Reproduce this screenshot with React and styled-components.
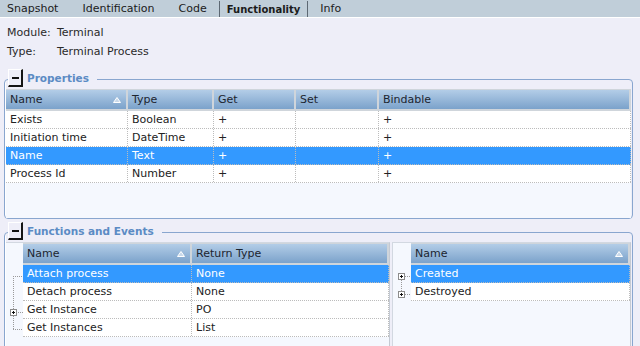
import React from "react";
import styled, { createGlobalStyle } from "styled-components";

const GlobalStyle = createGlobalStyle`
  html, body {
    margin: 0;
    padding: 0;
    height: 346px;
    overflow: hidden;
    background: #eeeef8;
    font-family: "DejaVu Sans", Verdana, sans-serif;
    font-size: 11px;
    color: #222;
  }
`;

const Page = styled.div`
  display: flex;
  flex-direction: column;
  height: 346px;
`;

const TabBar = styled.div`
  display: flex;
  height: 17px;
  background: #c0ced9;
  border-bottom: 1px solid #fff;
`;

const Tab = styled.div`
  padding: 0 ${(p) => (p.$active ? "7px" : "12px")};
  line-height: 17px;
  font-weight: ${(p) => (p.$active ? 700 : 400)};
  font-size: ${(p) => (p.$active ? "10px" : "11px")};
  color: #1b1b1b;
  border-left: ${(p) => (p.$active ? "1px solid #5d6873" : "none")};
  border-right: ${(p) => (p.$active ? "1px solid #5d6873" : "none")};
  margin-top: ${(p) => (p.$active ? "1px" : "0")};
  &:first-child {
    padding-left: 7px;
  }
`;

const InfoBlock = styled.div`
  padding: 5px 7px 0;
  margin-bottom: 8px;
`;

const InfoRow = styled.div`
  display: flex;
  line-height: 19px;
  color: #2a2a2a;
`;

const InfoLabel = styled.span`
  width: 50px;
`;

const Group = styled.fieldset`
  margin: ${(p) => (p.$first ? "0" : "3px")} 7px 0 4px;
  padding: 0 1px;
  border: 1px solid #89a6cf;
  border-radius: 4px;
  box-shadow: inset 1px 0 0 #fff;
  min-width: 0;
`;

const Legend = styled.legend`
  display: flex;
  align-items: flex-start;
  height: 20px;
  padding: 0 8px 0 0;
  margin-left: 2px;
`;

const CollapseButton = styled.div`
  width: 12px;
  height: 15px;
  border-left: 1px solid #fff;
  border-top: 1px solid #fff;
  border-right: 2px solid #151515;
  border-bottom: 2px solid #151515;
  display: flex;
  align-items: center;
  justify-content: center;
  &::before {
    content: "";
    width: 7px;
    height: 2px;
    background: #111;
  }
`;

const LegendTitle = styled.span`
  margin-left: 4px;
  padding-top: 1px;
  line-height: 17px;
  font-size: 10.5px;
  font-weight: 700;
  color: #5b8bc4;
`;

const PropsPanel = styled.div`
  height: 129px;
  background: #f5f8fe;
`;

const GridHead = styled.div`
  display: grid;
  grid-template-columns: ${(p) => p.$cols};
  height: 22px;
  box-sizing: border-box;
  background: linear-gradient(#b3cde7, #7ba2cb);
  border-top: 1px solid #cfd5db;
  border-bottom: 2px solid #cfd5db;
`;

const HeadCell = styled.div`
  display: flex;
  align-items: center;
  justify-content: space-between;
  padding: 0 5px 0 4px;
  border-right: 2px solid #cfd5db;
  color: #1c2530;
  white-space: nowrap;
  overflow: hidden;
`;

const GridRow = styled.div`
  display: grid;
  grid-template-columns: ${(p) => p.$cols};
  height: 18px;
  box-sizing: border-box;
  background: ${(p) => (p.$selected ? "#3399ff" : "#fff")};
  color: ${(p) => (p.$selected ? "#fff" : "#222")};
  border-bottom: 1px dotted #bcbcbc;
`;

const Cell = styled.div`
  padding: 0 4px;
  line-height: 17px;
  border-right: 1px dotted #bcbcbc;
  white-space: nowrap;
  overflow: hidden;
`;

const SplitPanels = styled.div`
  display: flex;
  gap: 2px;
  height: 140px;
`;

const Panel = styled.div`
  display: flex;
  flex: ${(p) => (p.$grow ? 1 : "none")};
  width: ${(p) => p.$width || "auto"};
  background: #f5f8fe;
  border-top: 1px solid #d2d8e1;
  border-left: ${(p) => (p.$grow ? "1px solid #d2d8e1" : "none")};
  border-right: 1px solid #c4cad3;
`;

const TreeGutter = styled.div`
  flex: none;
  width: ${(p) => p.$width}px;
  padding-top: 22px;
`;

const GridArea = styled.div`
  flex: 1;
  min-width: 0;
`;

const SortArrow = () => (
  <svg width="8" height="6" viewBox="0 0 8 6">
    <polygon points="4,0.5 7.5,5.5 0.5,5.5" fill="#c9d9ea" stroke="#fff" strokeWidth="1" />
  </svg>
);

const PlusBox = ({ x, y }) => (
  <g>
    <rect x={x + 0.5} y={y + 0.5} width="6" height="6" fill="#fff" stroke="#8c8c8c" />
    <line x1={x + 2} y1={y + 3.5} x2={x + 5} y2={y + 3.5} stroke="#111" />
    <line x1={x + 3.5} y1={y + 2} x2={x + 3.5} y2={y + 5} stroke="#111" />
  </g>
);

const dotted = { stroke: "#9a9a9a", strokeDasharray: "1 1" };

const FunctionsTree = () => (
  <svg width="17" height="72" viewBox="0 0 17 72">
    <line x1="7.5" y1="11" x2="7.5" y2="64" {...dotted} />
    <line x1="7" y1="11.5" x2="17" y2="11.5" {...dotted} />
    <line x1="7" y1="64.5" x2="17" y2="64.5" {...dotted} />
    <line x1="10" y1="47.5" x2="17" y2="47.5" {...dotted} />
    <PlusBox x={4} y={44} />
  </svg>
);

const EventsTree = () => (
  <svg width="18" height="36" viewBox="0 0 18 36">
    <line x1="8.5" y1="15" x2="8.5" y2="26" {...dotted} />
    <line x1="12" y1="11.5" x2="18" y2="11.5" {...dotted} />
    <line x1="12" y1="29.5" x2="18" y2="29.5" {...dotted} />
    <PlusBox x={5} y={8} />
    <PlusBox x={5} y={26} />
  </svg>
);

const PROP_COLS = "122px 86px 82px 83px 1fr";
const properties = [
  ["Exists", "Boolean", "+", "", "+"],
  ["Initiation time", "DateTime", "+", "", "+"],
  ["Name", "Text", "+", "", "+"],
  ["Process Id", "Number", "+", "", "+"],
];

const FN_COLS = "169px 1fr";
const functions = [
  ["Attach process", "None"],
  ["Detach process", "None"],
  ["Get Instance", "PO"],
  ["Get Instances", "List"],
];

const events = ["Created", "Destroyed"];

function Header({ cols, titles }) {
  return (
    <GridHead $cols={cols}>
      {titles.map((t, i) => (
        <HeadCell key={t}>
          {t}
          {i === 0 && <SortArrow />}
        </HeadCell>
      ))}
    </GridHead>
  );
}

export default function App() {
  return (
    <Page>
      <GlobalStyle />
      <TabBar>
        <Tab>Snapshot</Tab>
        <Tab>Identification</Tab>
        <Tab>Code</Tab>
        <Tab $active>Functionality</Tab>
        <Tab>Info</Tab>
      </TabBar>

      <InfoBlock>
        <InfoRow>
          <InfoLabel>Module:</InfoLabel>
          <span>Terminal</span>
        </InfoRow>
        <InfoRow>
          <InfoLabel>Type:</InfoLabel>
          <span>Terminal Process</span>
        </InfoRow>
      </InfoBlock>

      <Group $first>
        <Legend>
          <CollapseButton />
          <LegendTitle>Properties</LegendTitle>
        </Legend>
        <PropsPanel>
          <Header cols={PROP_COLS} titles={["Name", "Type", "Get", "Set", "Bindable"]} />
          {properties.map((row, i) => (
            <GridRow key={row[0]} $cols={PROP_COLS} $selected={i === 2}>
              {row.map((c, j) => (
                <Cell key={j}>{c}</Cell>
              ))}
            </GridRow>
          ))}
        </PropsPanel>
      </Group>

      <Group>
        <Legend>
          <CollapseButton />
          <LegendTitle>Functions and Events</LegendTitle>
        </Legend>
        <SplitPanels>
          <Panel $width="383px">
            <TreeGutter $width={17}>
              <FunctionsTree />
            </TreeGutter>
            <GridArea>
              <Header cols={FN_COLS} titles={["Name", "Return Type"]} />
              {functions.map((row, i) => (
                <GridRow key={row[0]} $cols={FN_COLS} $selected={i === 0}>
                  {row.map((c, j) => (
                    <Cell key={j}>{c}</Cell>
                  ))}
                </GridRow>
              ))}
            </GridArea>
          </Panel>
          <Panel $grow>
            <TreeGutter $width={18}>
              <EventsTree />
            </TreeGutter>
            <GridArea>
              <Header cols="1fr" titles={["Name"]} />
              {events.map((name, i) => (
                <GridRow key={name} $cols="1fr" $selected={i === 0}>
                  <Cell>{name}</Cell>
                </GridRow>
              ))}
            </GridArea>
          </Panel>
        </SplitPanels>
      </Group>
    </Page>
  );
}
